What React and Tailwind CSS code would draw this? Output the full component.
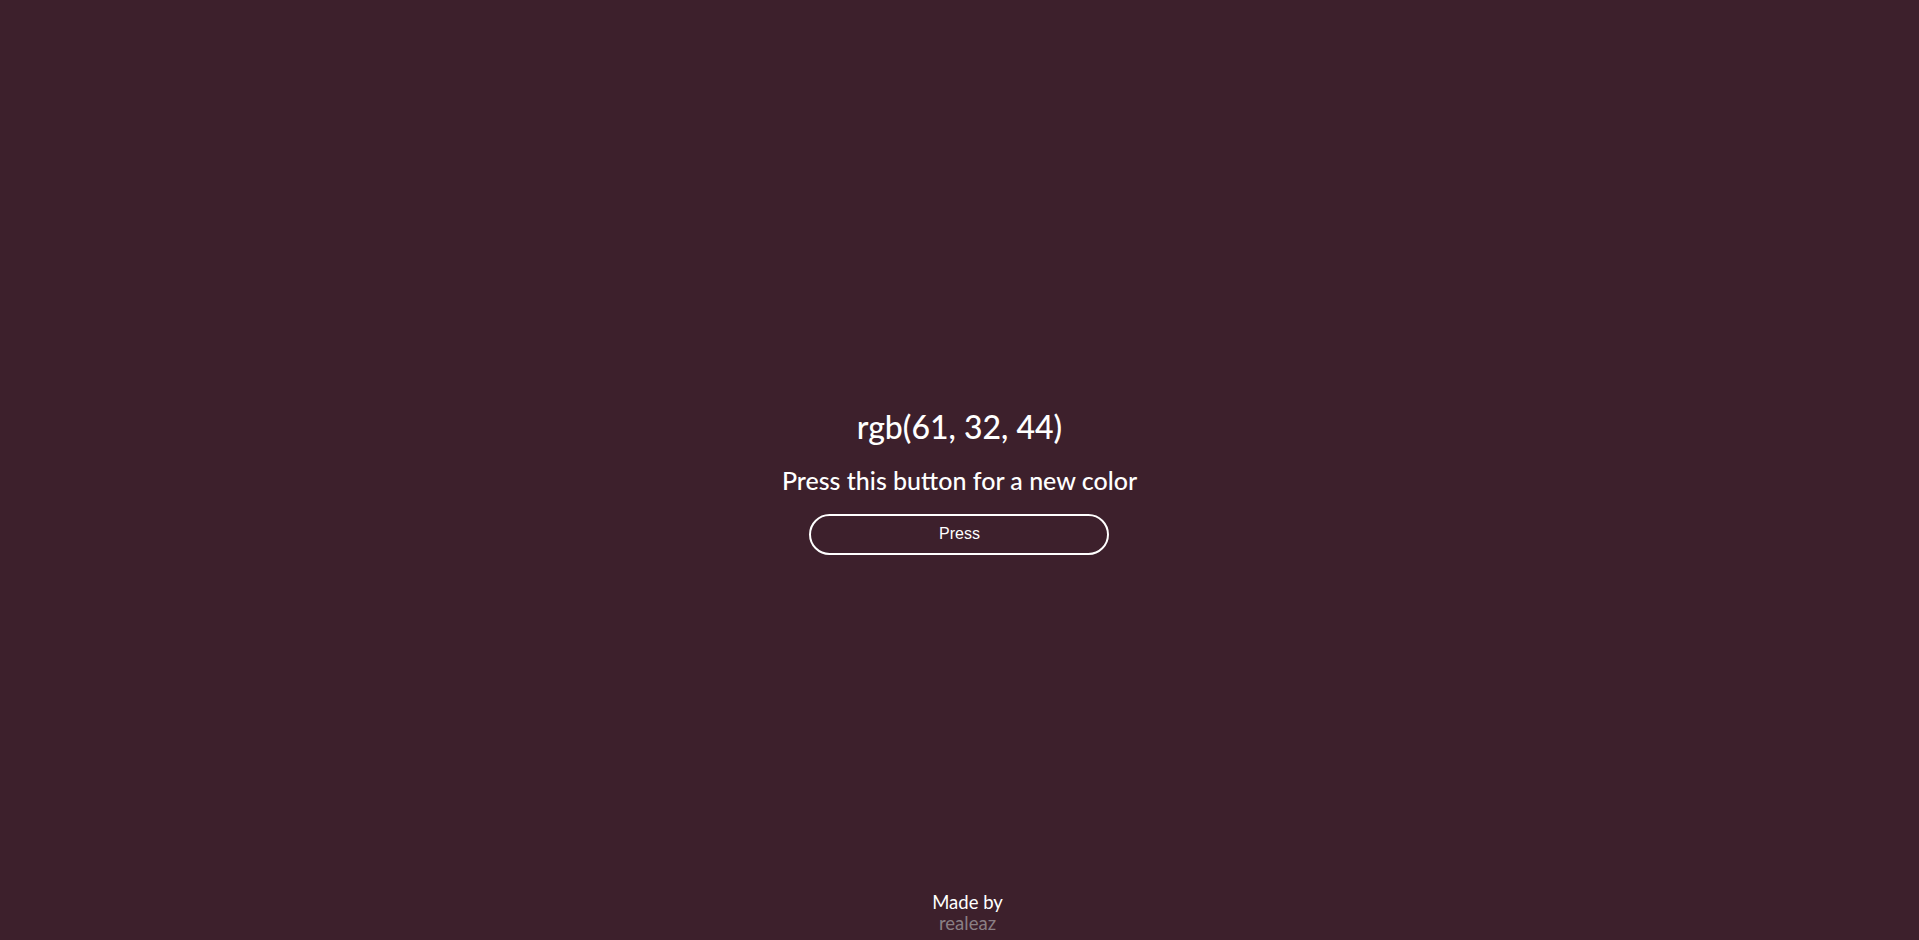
export default function App() {
  return (
    <div className="min-h-screen bg-[rgb(61,32,44)] flex flex-col items-center text-white font-['Lato','Open_Sans',sans-serif]">
      <main className="flex-1 flex flex-col items-center justify-center pt-[70px]">
        <h1 className="text-[32px] font-medium leading-[38px]">rgb(61, 32, 44)</h1>
        <h2 className="mt-[19px] text-[25px] font-medium leading-[30px]">
          Press this button for a new color
        </h2>
        <button className="mt-[19px] w-[300px] h-[41px] rounded-full border-2 border-white text-[16px] font-['Liberation_Sans',Arial,sans-serif]">
          Press
        </button>
      </main>

      <footer className="pb-[6px] pl-[16px] flex flex-col items-center text-[18.5px] leading-[21px]">
        <span>Made by</span>
        <span className="text-[#8a7f84]">realeaz</span>
      </footer>
    </div>
  )
}
